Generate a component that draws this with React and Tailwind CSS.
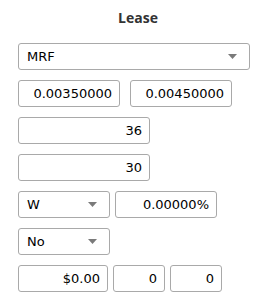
import React from 'react';

const Caret = () => (
  <svg width="9" height="5" viewBox="0 0 9 5" className="shrink-0">
    <path d="M0 0h9L4.5 5z" fill="#7a7a7a" />
  </svg>
);

const Field = ({ value, width }) => (
  <div
    className={`${width} h-[27px] border border-[#a9a9a9] rounded-[3px] bg-white flex items-center justify-end pr-[7px] text-[13px] text-black`}
  >
    {value}
  </div>
);

const Select = ({ value, width }) => (
  <div
    className={`${width} h-[27px] border border-[#a9a9a9] rounded-[3px] bg-white flex items-center justify-between pl-[8px] pr-[12px] text-[13px] text-black`}
  >
    <span>{value}</span>
    <Caret />
  </div>
);

const App = () => {
  return (
    <div
      className="w-[267px] h-[300px] bg-white pl-[18px] pr-[9px] pt-[8px]"
      style={{ fontFamily: '"DejaVu Sans", Verdana, sans-serif' }}
    >
      <div className="text-center text-[14px] font-bold text-[#333] leading-[19px] font-['Open_Sans',sans-serif]">
        Lease
      </div>

      <div className="flex flex-col gap-[10px] mt-[16px]">
        <Select value="MRF" width="w-[232px]" />

        <div className="flex gap-[10px]">
          <Field value="0.00350000" width="w-[102px]" />
          <Field value="0.00450000" width="w-[102px]" />
        </div>

        <Field value="36" width="w-[132px]" />
        <Field value="30" width="w-[132px]" />

        <div className="flex gap-[5px]">
          <Select value="W" width="w-[92px]" />
          <Field value="0.00000%" width="w-[102px]" />
        </div>

        <Select value="No" width="w-[92px]" />

        <div className="flex gap-[5px]">
          <Field value="$0.00" width="w-[90px]" />
          <Field value="0" width="w-[52px]" />
          <Field value="0" width="w-[52px]" />
        </div>
      </div>
    </div>
  );
};

export default App;
